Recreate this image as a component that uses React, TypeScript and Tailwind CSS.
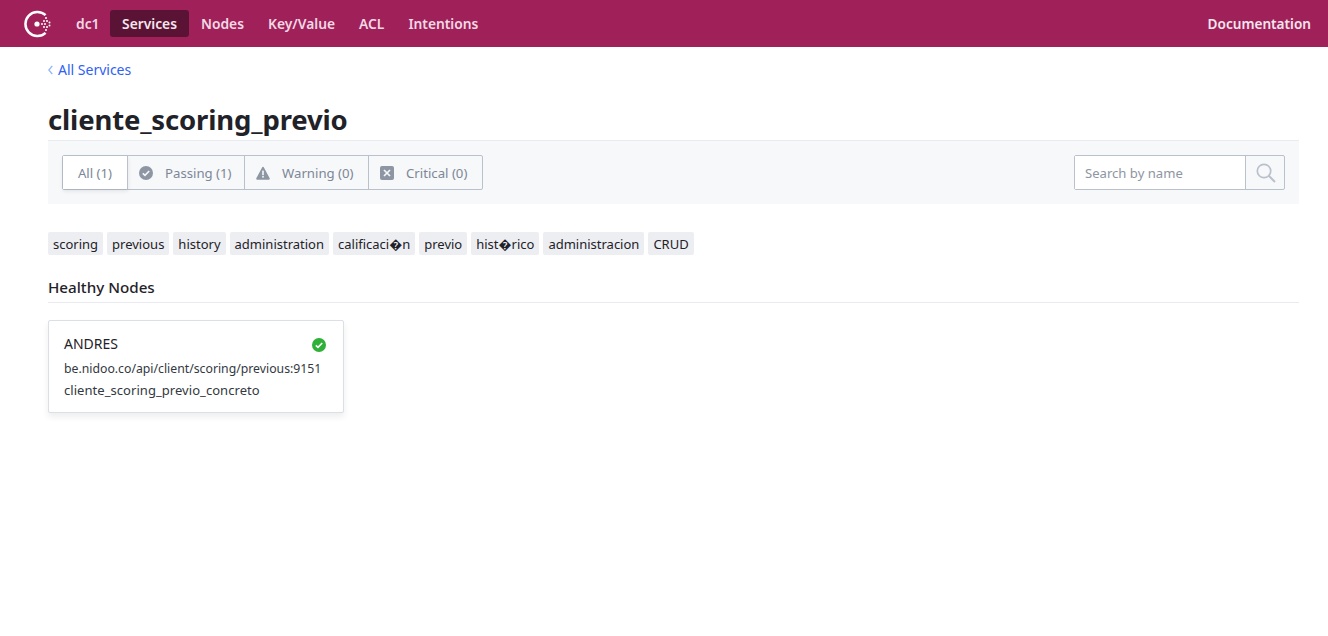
const navItems = ["Services", "Nodes", "Key/Value", "ACL", "Intentions"];
const tags = ["scoring", "previous", "history", "administration", "calificaci\uFFFDn", "previo", "hist\uFFFDrico", "administracion", "CRUD"];

function ConsulLogo() {
  return (
    <svg width="30" height="28" viewBox="0 0 30 28" fill="none" className="shrink-0">
      <path d="M22.6 5.2A12 12 0 1 0 22.6 22.8" stroke="#fff" strokeWidth="2.5" />
      <circle cx="14" cy="14" r="2.6" fill="#fff" />
      <g fill="#fff">
        <circle cx="19" cy="14" r="1" />
        <circle cx="23" cy="8" r="1" />
        <circle cx="21" cy="11" r="1" />
        <circle cx="24" cy="11" r="1" />
        <circle cx="26.5" cy="12.5" r="1" />
        <circle cx="22" cy="14" r="1" />
        <circle cx="26.5" cy="15.5" r="1" />
        <circle cx="21" cy="17" r="1" />
        <circle cx="24" cy="17" r="1" />
        <circle cx="23" cy="20" r="1" />
      </g>
    </svg>
  );
}

function PassingIcon({ color, tick = "#f7f8fa" }: { color: string; tick?: string }) {
  return (
    <svg width="14" height="14" viewBox="0 0 14 14">
      <circle cx="7" cy="7" r="7" fill={color} />
      <path d="M3.8 7.3 6 9.4 10.2 5" stroke={tick} strokeWidth="1.6" fill="none" />
    </svg>
  );
}

function WarningIcon() {
  return (
    <svg width="14" height="14" viewBox="0 0 14 14">
      <path d="M7 .8c.4 0 .7.2.9.6l5.8 10.9c.3.6-.1 1.4-.9 1.4H1.2c-.8 0-1.2-.8-.9-1.4L6.1 1.4C6.3 1 6.6.8 7 .8Z" fill="#8e96a3" />
      <rect x="6.2" y="4.6" width="1.6" height="4.6" fill="#f7f8fa" />
      <rect x="6.2" y="10" width="1.6" height="1.6" fill="#f7f8fa" />
    </svg>
  );
}

function CriticalIcon() {
  return (
    <svg width="14" height="14" viewBox="0 0 14 14">
      <rect width="14" height="14" rx="2" fill="#8e96a3" />
      <path d="M4 4l6 6M10 4l-6 6" stroke="#f7f8fa" strokeWidth="1.7" />
    </svg>
  );
}

function SearchIcon() {
  return (
    <svg width="20" height="20" viewBox="0 0 20 20" fill="none">
      <circle cx="8" cy="8" r="6.7" stroke="#bac1cc" strokeWidth="1.7" />
      <path d="M12.8 12.8 19 19" stroke="#bac1cc" strokeWidth="2" />
    </svg>
  );
}

function BackChevron() {
  return (
    <svg width="5" height="10" viewBox="0 0 5 10" fill="none" className="mr-[5px]">
      <path d="M4.3.8.8 5l3.5 4.2" stroke="#8fb4ff" strokeWidth="1.3" />
    </svg>
  );
}

export default function App() {
  return (
    <div className="min-h-[636px] bg-white font-['Noto_Sans',sans-serif] text-[#1f2228]">
      <header className="flex h-[47px] items-center justify-between bg-[#a0215a] pl-[23px] pr-[17px]">
        <div className="flex items-center">
          <ConsulLogo />
          <span className="ml-[23px] w-[22px] pt-[1px] text-[13.8px] font-semibold text-[#f2d9e5]">dc1</span>
          <nav className="ml-[12px] flex items-center">
            {navItems.map((item) => (
              <a
                key={item}
                className={
                  item === "Services"
                    ? "mr-[12px] flex h-[27px] w-[79px] items-center justify-center rounded-[3px] bg-[#5a1334] pt-[1px] text-[13.8px] font-semibold text-[#f5e6ee]"
                    : "mr-[24px] pt-[1px] text-[13.8px] font-semibold text-[#f2d9e5]"
                }
              >
                {item}
              </a>
            ))}
          </nav>
        </div>
        <a className="pt-[1px] text-[13.6px] font-semibold text-[#f5e6ee]">Documentation</a>
      </header>

      <main className="pl-[48px] pr-[29px]">
        <div className="flex h-[46px] items-center pb-[1px] text-[14px] text-[#2e62f5]">
          <BackChevron />
          All Services
        </div>
        <h1 className="h-[47px] text-[27.5px] leading-[54px] font-bold tracking-[-0.15px] text-[#1f2228]">cliente_scoring_previo</h1>

        <div className="flex h-[64px] items-center justify-between border-t border-[#e9ebf0] bg-[#f7f8fa] px-[14px]">
          <div className="flex h-[35px] items-stretch rounded-[2px] border border-[#bac1cc] text-[13.2px] text-[#7c8797]">
            <div className="flex w-[65px] items-center justify-center border-r border-[#bac1cc] bg-white pt-[2px] shadow-[0_2px_4px_rgba(31,34,40,0.1)]">All (1)</div>
            <div className="flex w-[117px] items-center gap-[12px] border-r border-[#bac1cc] pl-[11px]">
              <PassingIcon color="#8e96a3" />
              <span className="pt-[2px]">Passing (1)</span>
            </div>
            <div className="flex w-[124px] items-center gap-[12px] border-r border-[#bac1cc] pl-[11px]">
              <WarningIcon />
              <span className="pt-[2px]">Warning (0)</span>
            </div>
            <div className="flex w-[113px] items-center gap-[12px] pl-[11px]">
              <CriticalIcon />
              <span className="pt-[2px]">Critical (0)</span>
            </div>
          </div>
          <div className="flex h-[35px] w-[211px] items-stretch rounded-[2px] border border-[#bac1cc]">
            <div className="flex flex-1 items-center bg-white pl-[10px] pt-[2px] text-[13.1px] text-[#8e96a3]">Search by name</div>
            <div className="flex w-[39px] items-center justify-center border-l border-[#bac1cc] pl-[2px]">
              <SearchIcon />
            </div>
          </div>
        </div>

        <div className="mt-[28px] flex gap-[4px]">
          {tags.map((tag, i) => (
            <span key={i} className="flex h-[23px] items-center rounded-[2px] bg-[#eceef2] px-[5px] pt-[2px] text-[13px]">
              {tag}
            </span>
          ))}
        </div>

        <h2 className="mt-[20px] h-[28px] border-b border-[#e9ebf0] text-[15.2px] leading-[24px] font-medium">Healthy Nodes</h2>

        <div className="mt-[17px] h-[93px] w-[296px] rounded-[2px] border border-[#dcdfe6] bg-white pl-[15px] pr-[17px] shadow-[0_4px_6px_rgba(31,34,40,0.08)]">
          <div className="flex h-[46px] items-center justify-between">
            <span className="pb-[2px] text-[14px]">ANDRES</span>
            <span className="pt-[2px]">
              <PassingIcon color="#2eb039" tick="#fff" />
            </span>
          </div>
          <div className="text-[#333841]">
            <div className="-mt-[10px] text-[12.25px] leading-[23px]">be.nidoo.co/api/client/scoring/previous:9151</div>
            <div className="text-[13px] leading-[21px] tracking-[0.05px]">cliente_scoring_previo_concreto</div>
          </div>
        </div>
      </main>
    </div>
  );
}
